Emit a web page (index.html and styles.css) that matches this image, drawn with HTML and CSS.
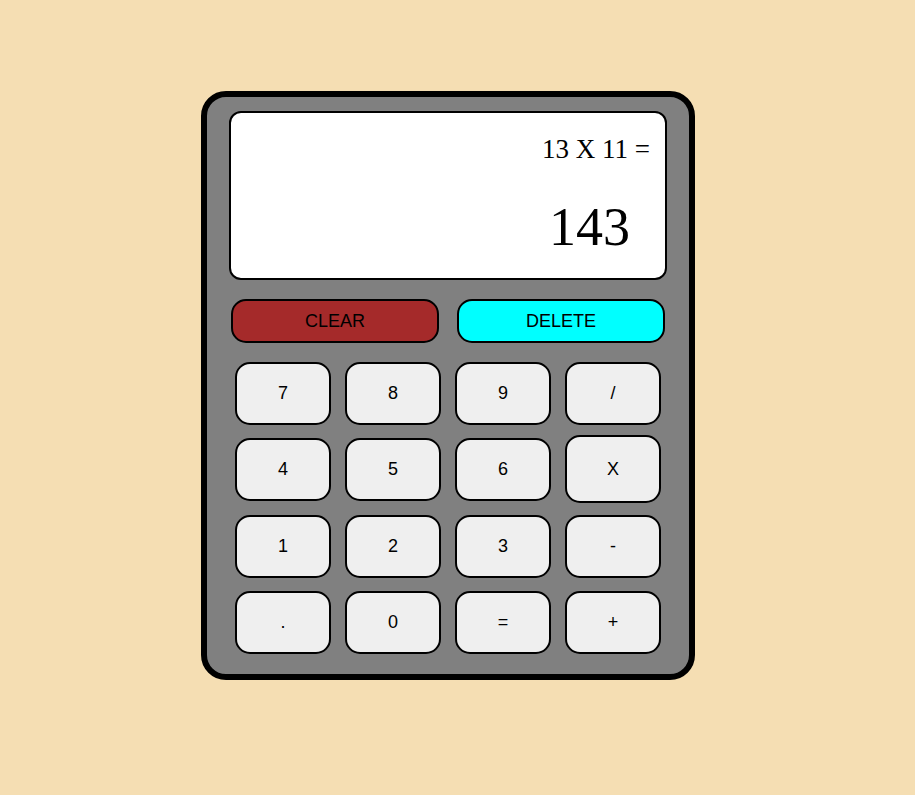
FILE: index.html
```html
<!DOCTYPE html>
<html lang="en">
<head>
<meta charset="utf-8">
<title>Calculator</title>
<link rel="stylesheet" href="styles.css">
</head>
<body>
<div class="calc">
  <div class="display">
    <div class="expr">13 X 11 =</div>
    <div class="result">143</div>
  </div>
  <div class="controls">
    <button class="ctrl clear">CLEAR</button>
    <button class="ctrl delete">DELETE</button>
  </div>
  <div class="keys">
    <button class="key">7</button>
    <button class="key">8</button>
    <button class="key">9</button>
    <button class="key">/</button>
    <button class="key">4</button>
    <button class="key">5</button>
    <button class="key">6</button>
    <button class="key key-active">X</button>
    <button class="key">1</button>
    <button class="key">2</button>
    <button class="key">3</button>
    <button class="key">-</button>
    <button class="key">.</button>
    <button class="key">0</button>
    <button class="key">=</button>
    <button class="key">+</button>
  </div>
</div>
</body>
</html>
```
FILE: styles.css
```css
* { box-sizing: border-box; }

body {
  margin: 0;
  padding: 91px 0 0 201px;
  background: #f5deb3;
  font-family: "Liberation Sans", Arial, sans-serif;
  min-height: 795px;
}

.calc {
  width: 494px;
  border: 6px solid #000;
  border-radius: 25px;
  background: #808080;
  padding: 14px 22px 20px;
}

.display {
  height: 169px;
  background: #fff;
  border: 2px solid #000;
  border-radius: 12px;
  display: flex;
  flex-direction: column;
  align-items: flex-end;
  padding: 21px 15px 0 0;
  font-family: "Liberation Serif", "Times New Roman", serif;
  color: #000;
}

.expr {
  font-size: 27px;
  line-height: 30px;
}

.result {
  font-size: 54px;
  line-height: 60px;
  margin-top: 33px;
  margin-right: 20px;
}

.controls {
  display: flex;
  gap: 18px;
  padding: 0 2px;
  margin-top: 19px;
}

.ctrl {
  width: 208px;
  height: 44px;
  border: 2px solid #000;
  border-radius: 15px;
  font-family: "Liberation Sans", Arial, sans-serif;
  font-size: 18px;
  color: #000;
  padding: 0;
}

.clear { background: #a52a2a; }
.delete { background: #00ffff; }

.keys {
  display: grid;
  grid-template-columns: repeat(4, 96px);
  grid-auto-rows: 63px;
  column-gap: 14px;
  row-gap: 13.4px;
  padding: 0 6px;
  margin-top: 19px;
}

.key {
  background: #efefef;
  border: 2px solid #000;
  border-radius: 15px;
  font-family: "Liberation Sans", Arial, sans-serif;
  font-size: 18px;
  color: #000;
  padding: 0;
}

.key-active {
  margin: -3px 0 -2px;
}
```
